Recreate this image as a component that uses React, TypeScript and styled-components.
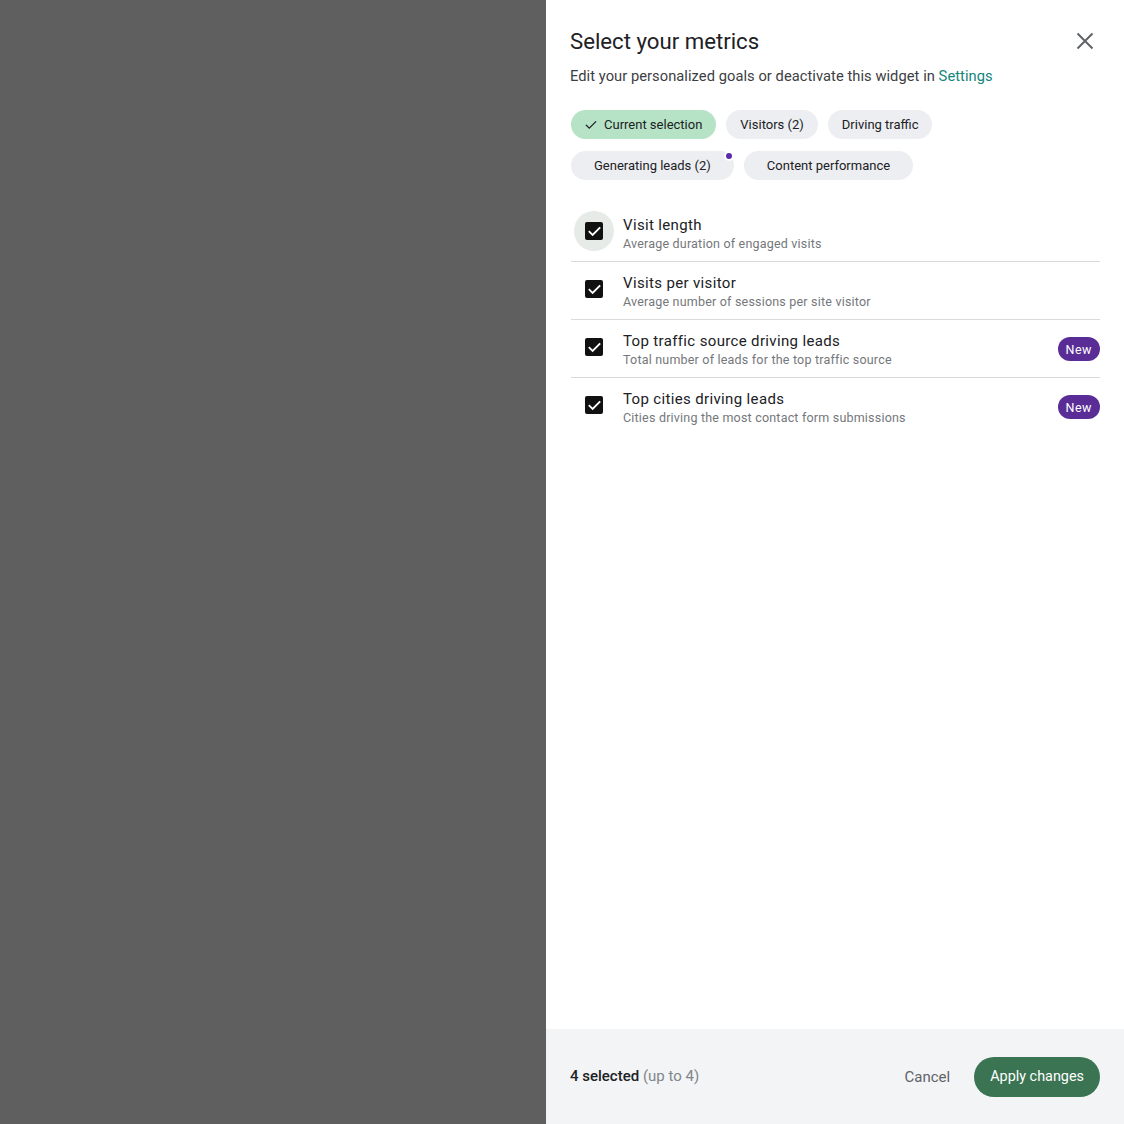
import React from "react";
import styled, { createGlobalStyle } from "styled-components";

const Global = createGlobalStyle`
  html, body { margin: 0; padding: 0; }
  body { font-family: Roboto, "Noto Sans", Arial, sans-serif; background: #5f5f5f; }
  * { box-sizing: border-box; }
`;

const Screen = styled.div`
  display: flex;
  width: 1124px;
  height: 1124px;
`;

const Backdrop = styled.div`
  width: 546px;
  background: #5f5f5f;
`;

const Panel = styled.aside`
  flex: 1;
  background: #ffffff;
  display: flex;
  flex-direction: column;
`;

const Body = styled.div`
  flex: 1;
  padding: 27px 24px 0 24px;
  display: flex;
  flex-direction: column;
`;

const Header = styled.div`
  display: flex;
  align-items: center;
  justify-content: space-between;
`;

const Title = styled.h1`
  margin: 0;
  font-size: 22.2px;
  font-weight: 400;
  color: #202124;
  line-height: 28px;
`;

const CloseButton = styled.button`
  width: 24px;
  height: 24px;
  border: none;
  background: transparent;
  padding: 0;
  margin-right: 3px;
  display: flex;
  align-items: center;
  justify-content: center;
  cursor: pointer;
`;

const Subtitle = styled.p`
  margin: 11px 0 0 0;
  font-size: 14.7px;
  line-height: 20px;
  color: #3c4043;
  letter-spacing: 0.05px;
`;

const Link = styled.a`
  color: #14857a;
  text-decoration: none;
`;

const Chips = styled.div`
  margin-top: 24px;
  display: flex;
  flex-direction: column;
  gap: 12px;
  padding-left: 1px;
`;

const ChipRow = styled.div`
  display: flex;
  gap: 10px;
`;

const Chip = styled.button<{ $active?: boolean; $wide?: boolean }>`
  position: relative;
  height: 29px;
  border: none;
  border-radius: 15px;
  padding: ${(p) => (p.$active ? "0 14px 0 13px" : p.$wide ? "0 23px" : "0 14px")};
  background: ${(p) => (p.$active ? "#b6e3c6" : "#eceef1")};
  color: #202124;
  font-family: Roboto, "Noto Sans", Arial, sans-serif;
  font-size: 13px;
  font-weight: 400;
  letter-spacing: 0;
  display: inline-flex;
  align-items: center;
  gap: 6px;
  cursor: pointer;
`;

const Dot = styled.span`
  position: absolute;
  top: 0;
  right: 0;
  width: 10px;
  height: 10px;
  border-radius: 50%;
  background: #5b2ca8;
  border: 2px solid #ffffff;
`;

const List = styled.div`
  margin-top: 24px;
  display: flex;
  flex-direction: column;
  padding-left: 1px;
`;

const Row = styled.div<{ $last?: boolean }>`
  display: flex;
  align-items: flex-start;
  padding: 7px 0 9px 0;
  border-bottom: 1px solid ${(p) => (p.$last ? "transparent" : "#d9dadc")};
`;

const CheckWrap = styled.div<{ $hover?: boolean }>`
  width: 40px;
  height: 40px;
  margin-left: 3px;
  border-radius: 50%;
  background: ${(p) => (p.$hover ? "#e6ebe8" : "transparent")};
  display: flex;
  align-items: center;
  justify-content: center;
  flex-shrink: 0;
`;

const Box = styled.span`
  width: 18px;
  height: 18px;
  border-radius: 2px;
  background: #111111;
  display: flex;
  align-items: center;
  justify-content: center;
`;

const Texts = styled.div`
  flex: 1;
  margin-left: 9px;
  margin-top: 5px;
  display: flex;
  flex-direction: column;
`;

const MetricTitle = styled.div`
  font-size: 15px;
  font-weight: 400;
  line-height: 19px;
  color: #202124;
  letter-spacing: 0.35px;
`;

const MetricSub = styled.div`
  font-size: 12.5px;
  line-height: 17px;
  color: #74777b;
  letter-spacing: 0.2px;
`;

const Badge = styled.span`
  height: 24px;
  margin-top: 10px;
  padding: 0 8px;
  border-radius: 12px;
  background: #5a2d96;
  color: #ffffff;
  font-size: 12.5px;
  font-weight: 400;
  letter-spacing: 0.5px;
  display: inline-flex;
  align-items: center;
`;

const Footer = styled.footer`
  height: 95px;
  background: #f3f4f6;
  display: flex;
  align-items: center;
  justify-content: space-between;
  padding: 0 24px;
`;

const Count = styled.div`
  font-size: 15px;
  color: #202124;
  margin-top: -2px;
`;

const Strong = styled.span`
  font-weight: 500;
`;

const Muted = styled.span`
  color: #80868b;
`;

const Actions = styled.div`
  display: flex;
  align-items: center;
  gap: 12px;
`;

const TextButton = styled.button`
  height: 40px;
  border: none;
  background: transparent;
  padding: 0 12px;
  font-family: Roboto, "Noto Sans", Arial, sans-serif;
  font-size: 15px;
  color: #5f6368;
  cursor: pointer;
`;

const PrimaryButton = styled.button`
  height: 40px;
  border: none;
  border-radius: 20px;
  padding: 0 16px;
  background: #3a7452;
  color: #ffffff;
  font-family: Roboto, "Noto Sans", Arial, sans-serif;
  font-size: 14.4px;
  cursor: pointer;
`;

const CheckMark = ({ color = "#fff", size = 15, weight = 3 }: { color?: string; size?: number; weight?: number }) => (
  <svg width={size} height={size} viewBox="0 0 24 24" fill="none">
    <path d="M4 12.5l5 5L20 6.5" stroke={color} strokeWidth={weight} strokeLinecap="square" />
  </svg>
);

const metrics = [
  { title: "Visit length", sub: "Average duration of engaged visits", isNew: false },
  { title: "Visits per visitor", sub: "Average number of sessions per site visitor", isNew: false },
  { title: "Top traffic source driving leads", sub: "Total number of leads for the top traffic source", isNew: true },
  { title: "Top cities driving leads", sub: "Cities driving the most contact form submissions", isNew: true },
];

export default function App() {
  return (
    <>
      <Global />
      <Screen>
        <Backdrop />
        <Panel>
          <Body>
            <Header>
              <Title>Select your metrics</Title>
              <CloseButton aria-label="Close">
                <svg width="24" height="24" viewBox="0 0 24 24" fill="none">
                  <path d="M4.5 4.5L19.5 19.5M19.5 4.5L4.5 19.5" stroke="#5f6368" strokeWidth="2" />
                </svg>
              </CloseButton>
            </Header>
            <Subtitle>
              Edit your personalized goals or deactivate this widget in <Link>Settings</Link>
            </Subtitle>
            <Chips>
              <ChipRow>
                <Chip $active>
                  <CheckMark color="#202124" size={14} weight={2.2} />
                  Current selection
                </Chip>
                <Chip>Visitors (2)</Chip>
                <Chip>Driving traffic</Chip>
              </ChipRow>
              <ChipRow>
                <Chip $wide>
                  Generating leads (2)
                  <Dot />
                </Chip>
                <Chip $wide>Content performance</Chip>
              </ChipRow>
            </Chips>
            <List>
              {metrics.map((m, i) => (
                <Row key={m.title} $last={i === metrics.length - 1}>
                  <CheckWrap $hover={i === 0}>
                    <Box>
                      <CheckMark />
                    </Box>
                  </CheckWrap>
                  <Texts>
                    <MetricTitle>{m.title}</MetricTitle>
                    <MetricSub>{m.sub}</MetricSub>
                  </Texts>
                  {m.isNew && <Badge>New</Badge>}
                </Row>
              ))}
            </List>
          </Body>
          <Footer>
            <Count>
              <Strong>4 selected</Strong> <Muted>(up to 4)</Muted>
            </Count>
            <Actions>
              <TextButton>Cancel</TextButton>
              <PrimaryButton>Apply changes</PrimaryButton>
            </Actions>
          </Footer>
        </Panel>
      </Screen>
    </>
  );
}
